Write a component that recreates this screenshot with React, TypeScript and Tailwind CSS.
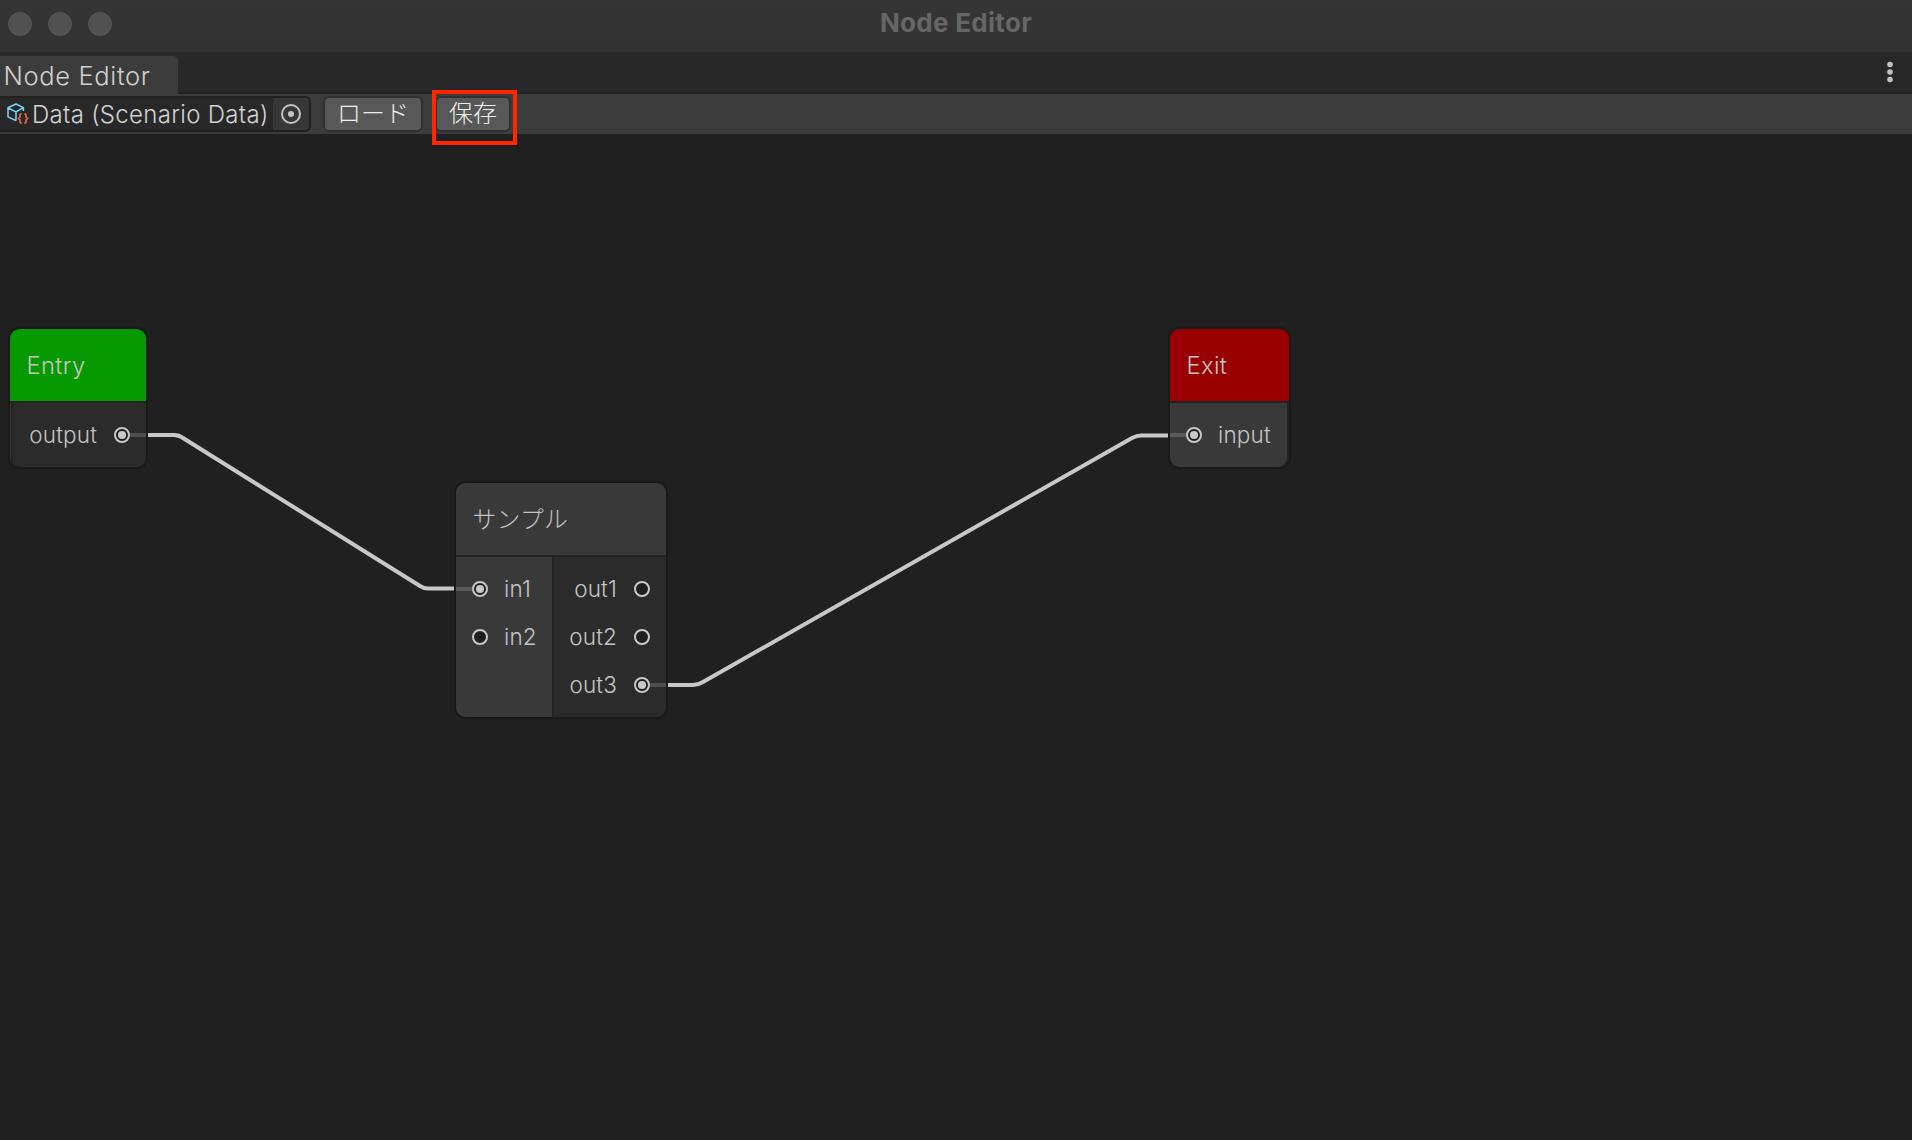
import React from "react";

const FONT = "font-['Inter','Noto_Sans_CJK_JP',sans-serif]";

function Port({ connected = false }: { connected?: boolean }) {
  return (
    <svg className="relative block h-4 w-4 shrink-0" viewBox="0 0 16 16">
      <circle cx="8" cy="8" r="7" fill="#1e1e1e" stroke="#c8c8c8" strokeWidth="2" />
      {connected && <circle cx="8" cy="8" r="4.1" fill="#c8c8c8" />}
    </svg>
  );
}

function InputRow({ label, connected = false }: { label: string; connected?: boolean }) {
  return (
    <div className="relative flex h-12 items-center pl-4">
      {connected && <div className="absolute left-0 top-[22px] h-1 w-4 bg-[#5c5c5c]" />}
      <Port connected={connected} />
      <span className="ml-4 whitespace-nowrap">{label}</span>
    </div>
  );
}

function OutputRow({ label, connected = false }: { label: string; connected?: boolean }) {
  return (
    <div className="relative flex h-12 items-center justify-end pr-4">
      {connected && <div className="absolute right-0 top-[22px] h-1 w-4 bg-[#4e4e4e]" />}
      <span className="mr-[17px] whitespace-nowrap">{label}</span>
      <Port connected={connected} />
    </div>
  );
}

function Node({ title, place, header, children }: { title: string; place: string; header: string; children: React.ReactNode }) {
  return (
    <section className={`absolute flex flex-col overflow-hidden rounded-[9px] bg-[#232323] outline-2 outline-[#1a1a1a] ${place}`}>
      <div className={`mb-0.5 flex h-[72px] items-center pl-[16.5px] pt-0.5 text-[23.8px] tracking-[0.3px] ${header}`}>{title}</div>
      <div className="flex flex-1 text-[22.5px] tracking-[0.15px]">{children}</div>
    </section>
  );
}

function DataIcon() {
  return (
    <svg className="block h-[22px] w-[22px] shrink-0" viewBox="0 0 22 22" fill="none" strokeLinejoin="round">
      <path d="M9 17.7 L1 13.8 V4.8 L9 1 L16.4 4.7 V8 M1 4.8 L9 8.8 L16.4 4.7 M9 8.8 V17.7" stroke="#7dd4fb" strokeWidth="1.5" />
      <path d="M14.7 11 H13.9 Q13 11 13 12 V14 L11.5 15.5 L13 17 V19 Q13 20 13.9 20 H14.7 M17.3 11 H18.1 Q19 11 19 12 V14 L20.5 15.5 L19 17 V19 Q19 20 18.1 20 H17.3" stroke="#f96a42" strokeWidth="1.6" />
    </svg>
  );
}

export default function App() {
  return (
    <div className={`flex h-[1140px] w-[1912px] flex-col overflow-hidden bg-[#202020] font-[350] text-[#c4c4c4] ${FONT}`}>
      <header className="relative flex h-[52px] shrink-0 items-center justify-center bg-linear-to-b from-[#353535] to-[#323232]">
        <div className="absolute left-2 top-3 flex gap-4">
          <i className="h-6 w-6 rounded-full bg-[#525252]" />
          <i className="h-6 w-6 rounded-full bg-[#525252]" />
          <i className="h-6 w-6 rounded-full bg-[#525252]" />
        </div>
        <h1 className="relative -top-[3px] text-[26px] font-bold leading-8 tracking-[0.3px] text-[#666666]">Node Editor</h1>
      </header>

      <nav className="flex h-[42px] shrink-0 items-end justify-between border-b-2 border-[#232323] bg-[#282828]">
        <div className="-mb-0.5 flex h-[38px] w-[178px] items-center rounded-tr-[5px] bg-[#3c3c3c] pl-[3.5px] pt-0.5 text-[25.5px] font-light tracking-[0.65px] text-[#d0d0d0]">
          <span className="whitespace-nowrap">Node Editor</span>
        </div>
        <svg className="mb-[9px] mr-[18px] h-[22px] w-2" viewBox="0 0 8 22" fill="#c4c4c4">
          <circle cx="4" cy="3.5" r="2.8" />
          <circle cx="4" cy="11" r="2.8" />
          <circle cx="4" cy="18.5" r="2.8" />
        </svg>
      </nav>

      <div className="flex h-10 shrink-0 items-center bg-[#3c3c3c]">
        <div className="flex h-9 w-[311px] items-center rounded-r-md border-2 border-l-0 border-[#202020] bg-[#282828] pl-[7px] text-[#d2d2d2]">
          <DataIcon />
          <span className="ml-[3px] w-[241px] whitespace-nowrap pt-0.5 text-[24px] tracking-[0.3px]">Data (Scenario Data)</span>
          <div className="flex h-8 flex-1 items-center justify-center rounded-r bg-[#373737]">
            <svg className="h-5 w-5" viewBox="0 0 20 20">
              <circle cx="10" cy="10" r="9" fill="none" stroke="#c4c4c4" strokeWidth="2" />
              <circle cx="10" cy="10" r="3" fill="#c4c4c4" />
            </svg>
          </div>
        </div>
        <button className="ml-3 flex h-9 w-[100px] items-center justify-center rounded-md border-2 border-[#303030] bg-[#585858] text-[24px] font-light text-[#eeeeee]">ロード</button>
        <button className="relative ml-3 flex h-9 w-[76px] items-center justify-center rounded-md border-2 border-[#303030] bg-[#585858] text-[24px] font-light text-[#eeeeee]">
          保存
          <span className="pointer-events-none absolute -left-[5px] -top-[8px] z-10 h-[55px] w-[85px] border-4 border-[#ff2600]" />
        </button>
      </div>

      <main className="relative flex-1 bg-[#202020]">
        <svg className="absolute left-0 top-0 h-[1006px] w-[1912px]" viewBox="0 134 1912 1006" fill="none" stroke="#c8c8c8" strokeWidth="4">
          <path d="M148 435 H174 Q179 435 183 438 L420 586 Q424 588.6 428 588.6 H454" />
          <path d="M668 685 H693 Q698 685 703 682 L1132 438 Q1137 435.5 1141 435.5 H1168" />
        </svg>

        <Node title="Entry" place="left-[10px] top-[195px] h-[138px] w-[136px]" header="bg-[#069a00]">
          <div className="mr-0.5 w-px bg-[#393939]" />
          <div className="flex-1 bg-[#2b2b2b] pt-2">
            <OutputRow label="output" connected />
          </div>
        </Node>

        <Node title="サンプル" place="left-[456px] top-[349px] h-[234px] w-[210px]" header="bg-[#393939] font-light">
          <div className="mr-0.5 w-24 bg-[#393939] pt-2">
            <InputRow label="in1" connected />
            <InputRow label="in2" />
          </div>
          <div className="flex-1 bg-[#2b2b2b] pt-2">
            <OutputRow label="out1" />
            <OutputRow label="out2" />
            <OutputRow label="out3" connected />
          </div>
        </Node>

        <Node title="Exit" place="left-[1170px] top-[195px] h-[138px] w-[119px]" header="bg-[#990000]">
          <div className="mr-0.5 flex-1 rounded-br-[9px] bg-[#393939] pt-2">
            <InputRow label="input" connected />
          </div>
        </Node>
      </main>
    </div>
  );
}
